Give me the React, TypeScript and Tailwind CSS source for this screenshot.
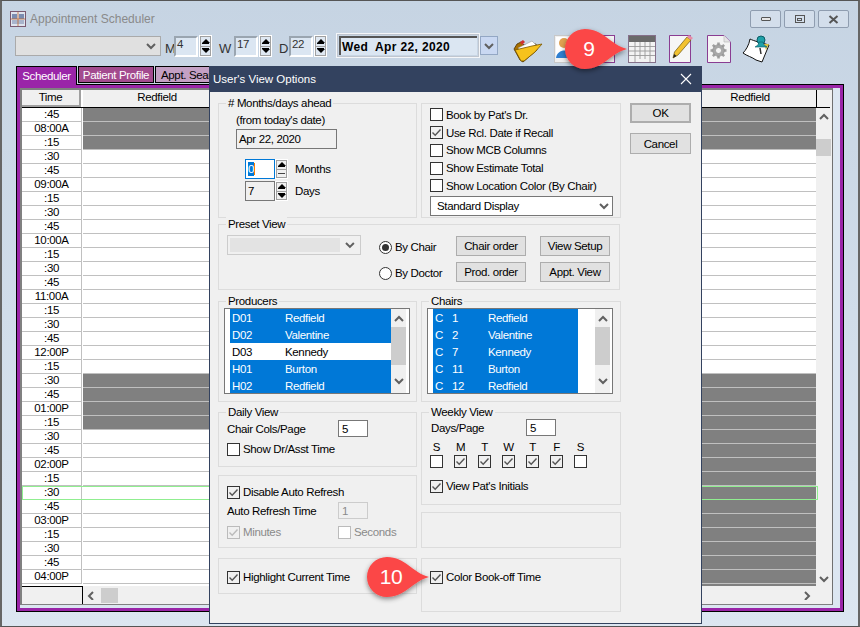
import type { ReactNode } from "react";

const times = Array.from({ length: 34 }, (_, i) => {
  const mins = 7 * 60 + 45 + i * 15;
  if (mins % 60 !== 0) return `:${mins % 60}`;
  const h = Math.floor(mins / 60);
  const h12 = h > 12 ? h - 12 : h;
  return `${String(h12).padStart(2, "0")}:00${h >= 12 ? "P" : "A"}`;
});

const isTop = (i: number) => i <= 2;
const firstGray = (i: number) => isTop(i) || (i >= 19 && i <= 22);
const lastGray = (i: number) => isTop(i) || i >= 19;

function Chevron({ dir, className = "" }: { dir: "up" | "down" | "left" | "right"; className?: string }) {
  const d = {
    up: "M1 6 L5 2 L9 6",
    down: "M1 2 L5 6 L9 2",
    left: "M6 1 L2 5 L6 9",
    right: "M3 1 L7 5 L3 9",
  }[dir];
  return (
    <svg width="10" height="10" viewBox="0 0 10 8" className={className}>
      <path d={d} fill="none" stroke="#606060" strokeWidth="2" />
    </svg>
  );
}

function Check({ color = "#555" }: { color?: string }) {
  return (
    <svg width="11" height="11" viewBox="0 0 11 11">
      <path d="M1.5 5.5 L4.2 8.2 L9.5 2.5" fill="none" stroke={color} strokeWidth="1.4" />
    </svg>
  );
}

function Box({ checked, disabled }: { checked?: boolean; disabled?: boolean }) {
  return (
    <span
      className={`flex h-[13px] w-[13px] shrink-0 items-center justify-center border ${
        disabled ? "border-[#bbbbbb]" : "border-[#333333]"
      } ${checked ? "bg-[#f0f0f0]" : "bg-white"}`}
    >
      {checked && <Check color={disabled ? "#bbbbbb" : "#555"} />}
    </span>
  );
}

function CheckRow({ label, checked, disabled, className = "" }: { label: string; checked?: boolean; disabled?: boolean; className?: string }) {
  return (
    <div className={`flex items-center gap-[3px] ${className}`}>
      <Box checked={checked} disabled={disabled} />
      <span className={disabled ? "text-[#8a8a8a]" : ""}>{label}</span>
    </div>
  );
}

function Radio({ label, on }: { label: string; on?: boolean }) {
  return (
    <div className="flex h-[14px] items-center gap-[3px]">
      <span className="flex h-[13px] w-[13px] items-center justify-center rounded-full border border-[#333333] bg-white">
        {on && <span className="h-[7px] w-[7px] rounded-full bg-[#333333]" />}
      </span>
      <span>{label}</span>
    </div>
  );
}

function Btn({ children, className = "" }: { children: ReactNode; className?: string }) {
  return (
    <div className={`flex items-center justify-center border border-[#adadad] bg-[#e1e1e1] ${className}`}>
      {children}
    </div>
  );
}

function Group({ legend, className = "", children }: { legend?: string; className?: string; children?: ReactNode }) {
  return (
    <div className={`relative border border-[#dcdcdc] ${className}`}>
      {legend && (
        <span className="absolute -top-[8px] left-[7px] bg-[#f0f0f0] px-[2px] leading-[14px]">{legend}</span>
      )}
      {children}
    </div>
  );
}

function Spin({ light, flat }: { light?: boolean; flat?: boolean }) {
  return (
    <div className={`flex h-full w-[13px] flex-col border border-white ${light ? "bg-[#dfe8f2]" : "bg-[#f0f0f0]"}`}>
      <div className="flex flex-1 flex-col items-center justify-center border border-[#a0a0a0]">
        <span className="h-0 w-0 border-x-[4px] border-b-[4px] border-x-transparent border-b-black" />
        <span className="h-px w-[7px] bg-black" />
      </div>
      <div className="flex flex-1 flex-col items-center justify-center border border-t-0 border-[#a0a0a0]">
        <span className={`h-px w-[7px] ${flat ? "bg-[#444444]" : "bg-black"}`} />
        {!flat && <span className="h-0 w-0 border-x-[4px] border-t-[4px] border-x-transparent border-t-black" />}
      </div>
    </div>
  );
}

function TopSpin({ label, value, labelW }: { label: string; value: string; labelW: string }) {
  return (
    <div className="flex h-[22px] items-end">
      <span className={`${labelW} text-[13px] leading-[16px] text-[#333333]`}>{label}</span>
      <div className="h-[21px] w-[24px] border-2 border-t-[#9aa5b0] border-l-[#9aa5b0] border-r-white border-b-white bg-[#dbe6f2] pl-[1px] leading-[13px] text-[#333333]">
        {value}
      </div>
      <div className="ml-px h-[22px]">
        <Spin light />
      </div>
    </div>
  );
}

function Listing({
  rows,
  selectedW,
  gutter,
}: {
  rows: { code: ReactNode; name: string; off?: boolean }[];
  selectedW: string;
  gutter?: boolean;
}) {
  return (
    <div className="flex h-[86px] w-[186px] overflow-hidden border border-[#777777] bg-white pl-[5px]">
      <div className={`${selectedW} shrink-0`}>
        {rows.map((r) => (
          <div
            key={r.name + String(r.code)}
            className={`flex h-[17px] items-center pl-[2px] ${r.off ? "bg-white text-black" : "bg-[#0078d7] text-white"}`}
          >
            <span className="flex w-[53px] shrink-0">{r.code}</span>
            <span>{r.name}</span>
          </div>
        ))}
      </div>
      {gutter && <div className="w-[17px] shrink-0" />}
      <div className="flex h-full w-[15px] shrink-0 flex-col items-center bg-[#f0f0f0] pt-[5px]">
        <Chevron dir="up" />
        <div className="mt-[3px] h-[38px] w-[15px] bg-[#cdcdcd]" />
        <Chevron dir="down" className="mt-[11px]" />
      </div>
    </div>
  );
}

function Callout({ n, className }: { n: string; className: string }) {
  return (
    <svg width="76" height="56" viewBox="0 0 76 56" className={`absolute z-30 ${className}`}>
      <defs>
        <filter id={`s${n}`} x="-20%" y="-20%" width="140%" height="150%">
          <feDropShadow dx="0" dy="2" stdDeviation="2.5" floodColor="#000" floodOpacity="0.45" />
        </filter>
      </defs>
      <path
        d="M68 24 C52 20 44 4 26 4 A20 20 0 1 0 26 44 C44 44 52 28 68 24 Z"
        fill="#fb4646"
        filter={`url(#s${n})`}
      />
      <text x="30" y="31" textAnchor="middle" fill="#fff" fontSize="21" fontFamily="Liberation Sans, Arial, sans-serif">
        {n}
      </text>
    </svg>
  );
}

function FolderIcon() {
  return (
    <svg width="30" height="24" viewBox="0 0 30 24" className="mt-[6px]">
      <path d="M1 10 L7 21 L10 23 L24 11 L23 5 L11 6 L8 3 L4 5 Z" fill="#a87000" stroke="#4a3000" strokeWidth="0.8" />
      <path d="M5 9 L19 2 L23 6 L9 14 Z" fill="#fff" stroke="#888" strokeWidth="0.5" />
      <path d="M2 11 L19 7 L29 5 L22 13 L11 22 L8 22 Z" fill="#f6c21c" stroke="#7a5600" strokeWidth="0.8" />
      <path d="M7 3 L10 1 L12 3 L9 6 Z" fill="#d03030" />
    </svg>
  );
}

function PersonIcon() {
  return (
    <svg width="28" height="28" viewBox="0 0 28 28">
      <rect x="0.5" y="0.5" width="27" height="27" fill="#f0f0f0" stroke="#c8c8c8" />
      <rect x="2" y="2" width="24" height="21" fill="#fff" />
      <circle cx="10" cy="8" r="5" fill="#e0a050" />
      <path d="M2 23 C3 13 18 13 19 23 Z" fill="#2f7fd0" />
    </svg>
  );
}

function CalendarIcon() {
  return (
    <svg width="28" height="28" viewBox="0 0 28 28">
      <rect x="0.5" y="0.5" width="27" height="27" fill="#f3f3f3" stroke="#85708a" />
      <rect x="1" y="1" width="26" height="6" fill="#6a6a6a" />
      <path d="M1 11.5 H27 M1 16 H27 M1 20.5 H27 M7 7 V27 M12 7 V24 M17 7 V24 M22 7 V27" stroke="#9a9a9a" strokeWidth="0.9" />
    </svg>
  );
}

function PencilIcon() {
  return (
    <svg width="24" height="28" viewBox="0 0 24 28">
      <path d="M0.5 0.5 H21.5 V27.5 H0.5 Z" fill="#f6f6f6" stroke="#8a3d92" />
      <path d="M4 23 L5.5 17 L18 2 L22 5 L9 20 Z" fill="#f2c230" stroke="#6a5410" strokeWidth="0.7" />
      <path d="M18 2 L20 0 L24 3 L22 5 Z" fill="#e88ca8" />
      <path d="M4 23 L5.2 19 L7.5 21 Z" fill="#222" />
    </svg>
  );
}

function GearIcon() {
  return (
    <svg width="24" height="28" viewBox="0 0 24 28">
      <path d="M0.5 0.5 H17 L23.5 7 V27.5 H0.5 Z" fill="#f4f4f4" stroke="#8a3d92" />
      <path d="M17 0.5 V7 H23.5" fill="#e4e4e4" stroke="#bbb" strokeWidth="0.7" />
      <g transform="translate(11.5 15.5)">
        {[0, 45, 90, 135].map((a) => (
          <rect key={a} x="-1.3" y="-8" width="2.6" height="16" fill="#a0a0a0" transform={`rotate(${a})`} />
        ))}
        <circle r="5.8" fill="#a8a8a8" stroke="#888" strokeWidth="0.6" />
        <circle r="3" fill="#f4f4f4" stroke="#888" strokeWidth="0.6" />
      </g>
    </svg>
  );
}

function PinIcon() {
  return (
    <svg width="30" height="28" viewBox="0 0 30 28">
      <path d="M8 4 C12 6 20 8 27 10 L20 27 L14 25 C10 22 5 21 1 18 C4 15 7 10 8 4 Z" fill="#fff" stroke="#111" strokeWidth="1" />
      <path d="M22 9 L27 9 L24 15 Z" fill="#d8c040" />
      <path d="M18 13 L19 19" stroke="#333" strokeWidth="1.5" />
      <circle cx="19" cy="5" r="4" fill="#1fa0a8" stroke="#0b5d66" />
      <path d="M17 7 H21 L22 10 L25 12 H13 L16 10 Z" fill="#1fa0a8" stroke="#0b5d66" strokeWidth="0.6" />
    </svg>
  );
}

function WinBtn({ children }: { children: ReactNode }) {
  return (
    <div className="flex h-[18px] w-[31px] items-center justify-center rounded-[2px] border border-[#8f9db0] bg-[#d3deeb]">
      {children}
    </div>
  );
}

const producers = [
  { code: "D01", name: "Redfield" },
  { code: "D02", name: "Valentine" },
  { code: "D03", name: "Kennedy", off: true },
  { code: "H01", name: "Burton" },
  { code: "H02", name: "Redfield" },
];

const chair = (n: string) => (
  <>
    <span className="w-[17px]">C</span>
    <span>{n}</span>
  </>
);

const chairs = [
  { code: chair("1"), name: "Redfield" },
  { code: chair("2"), name: "Valentine" },
  { code: chair("7"), name: "Kennedy" },
  { code: chair("11"), name: "Burton" },
  { code: chair("12"), name: "Redfield" },
];

const week = [
  { d: "S", on: false },
  { d: "M", on: true },
  { d: "T", on: true },
  { d: "W", on: true },
  { d: "T", on: true },
  { d: "F", on: true },
  { d: "S", on: false },
];

function Dialog() {
  return (
    <div className="absolute left-[207px] top-[65px] z-20 flex h-[558px] w-[493px] flex-col border-x border-b border-[#33425f] bg-[#f0f0f0]">
      <div className="flex h-[26px] shrink-0 items-center justify-between bg-[#33425f] pl-[3px] pr-[9px] text-[11.5px] tracking-normal text-white">
        <span>User's View Options</span>
        <svg width="12" height="12" viewBox="0 0 12 12">
          <path d="M1 1 L11 11 M11 1 L1 11" stroke="#fff" strokeWidth="1.1" />
        </svg>
      </div>
      <div className="flex gap-[9px] pl-[8px] pt-[11px]">
        <div className="flex w-[403px] flex-col">
          {/* top groups */}
          <div className="flex gap-[4px]">
            <Group legend="# Months/days ahead" className="h-[115px] w-[199px] pl-[17px] pt-[9px]">
              <div>(from today's date)</div>
              <div className="mt-[2px] flex h-[20px] w-[101px] items-center border border-[#777777] pl-[2px]">
                Apr 22, 2020
              </div>
              <div className="ml-[9px] mt-[10px] flex h-[20px] items-center">
                <div className="flex h-[20px] w-[30px] items-center border border-[#0078d7] bg-white pl-[2px]">
                  <span className="bg-[#0078d7] text-white">0</span>
                  <span className="h-[12px] w-px bg-[#ff8000]" />
                </div>
                <Spin flat />
                <span className="ml-[7px]">Months</span>
              </div>
              <div className="ml-[9px] mt-[2px] flex h-[20px] items-center">
                <div className="flex h-[20px] w-[30px] items-center border border-[#777777] pl-[2px]">7</div>
                <Spin />
                <span className="ml-[7px]">Days</span>
              </div>
            </Group>
            <Group className="h-[115px] w-[200px] pl-[8px] pt-[2px]">
              <CheckRow className="h-[17.75px]" label="Book by Pat's Dr." />
              <CheckRow className="h-[17.75px]" label="Use Rcl. Date if Recall" checked />
              <CheckRow className="h-[17.75px]" label="Show MCB Columns" />
              <CheckRow className="h-[17.75px]" label="Show Estimate Total" />
              <CheckRow className="h-[17.75px]" label="Show Location Color (By Chair)" />
              <div className="mt-px flex h-[20px] w-[183px] items-center justify-between border border-[#777777] bg-white pl-[6px] pr-[3px]">
                <span>Standard Display</span>
                <Chevron dir="down" />
              </div>
            </Group>
          </div>

          {/* preset view */}
          <Group legend="Preset View" className="mt-[6px] flex h-[66px] w-[402px] pl-[8px] pt-[10px]">
            <div className="flex h-[20px] w-[134px] items-center border border-[#cccccc] py-[2px] pl-[2px] pr-[5px]">
              <div className="h-full w-[112px] bg-[#e3e3e3]" />
              <Chevron dir="down" className="ml-[5px]" />
            </div>
            <div className="ml-[18px] mt-[5px] flex w-[77px] flex-col gap-[12px]">
              <Radio label="By Chair" on />
              <Radio label="By Doctor" />
            </div>
            <div className="mt-px grid h-fit grid-cols-[70px_70px] gap-x-[14px] gap-y-[6px]">
              <Btn className="h-[20px]">Chair order</Btn>
              <Btn className="h-[20px]">View Setup</Btn>
              <Btn className="h-[20px]">Prod. order</Btn>
              <Btn className="h-[20px]">Appt. View</Btn>
            </div>
          </Group>

          {/* lists */}
          <div className="mt-[11px] flex gap-[4px]">
            <Group legend="Producers" className="h-[101px] w-[199px] pl-[5px] pt-[6px]">
              <Listing rows={producers} selectedW="w-[161px]" />
            </Group>
            <Group legend="Chairs" className="h-[101px] w-[200px] pl-[5px] pt-[6px]">
              <Listing rows={chairs} selectedW="w-[145px]" gutter />
            </Group>
          </div>

          {/* lower columns */}
          <div className="mt-[10px] flex gap-[4px]">
            <div className="flex w-[199px] flex-col">
              <Group legend="Daily View" className="h-[55px] pl-[8px] pt-[7px]">
                <div className="flex items-center">
                  <span className="w-[111px]">Chair Cols/Page</span>
                  <div className="flex h-[17px] w-[30px] items-center border border-[#777777] bg-white pl-[3px]">5</div>
                </div>
                <CheckRow className="mt-[5px] h-[14px]" label="Show Dr/Asst Time" />
              </Group>
              <Group className="mt-[8px] h-[73px] pl-[8px] pt-[9px]">
                <CheckRow className="h-[14px]" label="Disable Auto Refresh" checked />
                <div className="mt-[3px] flex items-center">
                  <span className="w-[111px]">Auto Refresh Time</span>
                  <div className="flex h-[17px] w-[30px] items-center border border-[#cccccc] pl-[3px] text-[#8a8a8a]">1</div>
                </div>
                <div className="mt-[6px] flex">
                  <CheckRow className="h-[14px] w-[111px]" label="Minutes" checked disabled />
                  <CheckRow className="h-[14px]" label="Seconds" disabled />
                </div>
              </Group>
              <Group className="mt-[10px] h-[36px] pl-[8px] pt-[11px]">
                <CheckRow className="h-[14px]" label="Highlight Current Time" checked />
              </Group>
            </div>
            <div className="flex w-[200px] flex-col">
              <Group legend="Weekly View" className="h-[93px] pl-[8px] pt-[6px]">
                <div className="flex items-center">
                  <span className="w-[96px] pl-px">Days/Page</span>
                  <div className="flex h-[17px] w-[30px] items-center border border-[#777777] bg-white pl-[3px]">5</div>
                </div>
                <div className="mt-[4px] flex gap-[11px]">
                  {week.map((w, i) => (
                    <span key={i} className="w-[13px] text-center">{w.d}</span>
                  ))}
                </div>
                <div className="mt-px flex gap-[11px]">
                  {week.map((w, i) => (
                    <Box key={i} checked={w.on} />
                  ))}
                </div>
                <CheckRow className="mt-[11px] h-[14px]" label="View Pat's Initials" checked />
              </Group>
              <Group className="mt-[7px] h-[36px]" />
              <Group className="mt-[10px] h-[54px] pl-[8px] pt-[11px]">
                <CheckRow className="h-[14px]" label="Color Book-off Time" checked />
              </Group>
            </div>
          </div>
        </div>

        <div className="flex w-[61px] flex-col gap-[10px]">
          <Btn className="h-[20px] border-2 border-[#0078d7]">OK</Btn>
          <Btn className="h-[21px]">Cancel</Btn>
        </div>
      </div>
    </div>
  );
}

function ScheduleGrid() {
  return (
    <div className="flex h-[514px] flex-col bg-[#f0f0f0]">
      <div className="flex flex-1">
        <div className="flex w-[794px] flex-col">
          <div className="flex h-[18px] border-b border-black bg-[#f0f0f0]">
            <div className="w-[59px] border-b-2 border-r-2 border-[#a0a0a0] text-center">Time</div>
            <div className="w-[2px] bg-white" />
            <div className="w-[148px] text-center">Redfield</div>
            <div className="flex-1" />
            <div className="w-[132px] text-center">Redfield</div>
          </div>
          {times.map((t, i) => (
            <div
              key={i}
              className={`flex h-[14px] ${
                i === 27 ? "relative z-10 w-[796px] outline-1 -outline-offset-1 outline-[#90ee90]" : ""
              }`}
            >
              <div className="w-[59px] border-b border-[#c0c0c0] bg-white text-center leading-[13px]">{t}</div>
              <div className="w-[1px] bg-[#c0c0c0]" />
              <div className="w-[1px] bg-white" />
              <div className={`w-[148px] border-b border-[#c0c0c0] ${firstGray(i) ? "bg-[#808080]" : "bg-white"}`} />
              <div className="flex-1 border-b border-[#c0c0c0] bg-white" />
              <div className={`w-[132px] border-b border-[#c0c0c0] ${lastGray(i) ? "bg-[#808080]" : "bg-white"}`} />
              {i === 27 && <div className="w-[2px]" />}
            </div>
          ))}
          <div className="flex h-[2px]">
            <div className="w-[61px] bg-white" />
            <div className="flex-1 bg-white" />
            <div className="w-[132px] bg-[#808080]" />
          </div>
        </div>
        <div className="flex flex-1 flex-col">
          <div className="mr-[2px] h-[18px] border-b border-l border-black" />
          <div className="flex w-[15px] flex-1 flex-col items-center pt-[4px]">
            <Chevron dir="up" />
            <div className="mt-[17px] h-[17px] w-[15px] bg-[#cdcdcd]" />
            <Chevron dir="down" className="mt-auto mb-[2px]" />
          </div>
        </div>
      </div>
      <div className="flex h-[18px] items-center">
        <div className="h-full w-[61px] border-r border-t border-black" />
        <Chevron dir="left" className="ml-[4px]" />
        <div className="ml-[4px] h-[15px] w-[17px] bg-[#cdcdcd]" />
        <Chevron dir="right" className="ml-[684px]" />
      </div>
    </div>
  );
}

export default function App() {
  return (
    <div className="relative h-[627px] w-[860px] overflow-hidden border-x-2 border-y border-x-[#666666] border-y-[#555555] bg-gradient-to-b from-[#c6d4e3] to-[#dce6f1] font-['Liberation_Sans',Arial,sans-serif] text-[11.5px] leading-[14px] tracking-[-0.35px] text-black">
      {/* title row */}
      <div className="mt-[9px] flex h-[18px] items-center pl-[8px] pr-[9px]">
        <svg width="16" height="16" viewBox="0 0 16 16">
          <rect x="0.5" y="0.5" width="15" height="15" fill="#dfe4ee" stroke="#7a5a70" />
          <rect x="2" y="3" width="5" height="5" fill="#7a8cb0" />
          <rect x="9" y="3" width="5" height="5" fill="#7a8cb0" />
          <rect x="2" y="9" width="12" height="4" fill="#a8b4cc" />
          <path d="M8 1 V15 M1 8 H15" stroke="#c06a30" strokeWidth="0.8" />
        </svg>
        <span className="ml-[4px] text-[12px] tracking-normal text-[#8a8a8a]">Appointment Scheduler</span>
        <div className="ml-auto flex gap-[3px]">
          <WinBtn><span className="h-[4px] w-[10px] rounded-[1px] border border-[#555555] bg-[#e6e6e6]" /></WinBtn>
          <WinBtn><span className="flex h-[8px] w-[10px] items-center justify-center border border-[#555555]"><span className="h-[3px] w-[5px] border border-[#555555]" /></span></WinBtn>
          <WinBtn>
            <svg width="11" height="9" viewBox="0 0 11 9">
              <path d="M1.5 1 L9.5 8 M9.5 1 L1.5 8" stroke="#555" strokeWidth="2" />
            </svg>
          </WinBtn>
        </div>
      </div>

      {/* toolbar */}
      <div className="mt-[5px] flex h-[30px] items-start pl-[13px]">
        <div className="mt-[3px] flex h-[20px] w-[146px] items-center justify-end border border-[#aaaaaa] bg-[#e0e0e0] pr-[4px]">
          <Chevron dir="down" />
        </div>
        <div className="ml-[4px] mt-[2px]"><TopSpin label="M" value="4" labelW="w-[9px]" /></div>
        <div className="ml-[7px] mt-[2px]"><TopSpin label="W" value="17" labelW="w-[15px]" /></div>
        <div className="ml-[7px] mt-[2px]"><TopSpin label="D" value="22" labelW="w-[10px]" /></div>
        <div className="ml-[9px] flex h-[25px] w-[144px] items-center border-2 border-[#f4f6f9] outline-1 -outline-offset-2 outline-[#c0c6cf]">
          <div className="mx-px flex h-[19px] flex-1 items-center whitespace-pre border-l-2 border-t-2 border-[#555555] bg-[#dbe6f2] pl-[1px] text-[12px] font-bold tracking-[0.35px]">
            Wed  Apr 22, 2020
          </div>
        </div>
        <div className="mt-[3px] flex h-[19px] w-[18px] items-center justify-center border border-[#93a7c4] bg-[#c9d8f2]">
          <Chevron dir="down" />
        </div>
        <div className="ml-[15px]"><FolderIcon /></div>
        <div className="ml-[11px] mt-[2px]"><PersonIcon /></div>
        <div className="ml-[9px] mt-[2px] h-[28px] w-[24px] border border-[#8a3d92] bg-[#f4f4f4]" />
        <div className="ml-[13px] mt-[2px]"><CalendarIcon /></div>
        <div className="ml-[13px] mt-[2px]"><PencilIcon /></div>
        <div className="ml-[14px] mt-[2px]"><GearIcon /></div>
        <div className="ml-[11px] mt-[2px]"><PinIcon /></div>
      </div>

      {/* tabs */}
      <div className="ml-[14px] mt-[3px] flex h-[18px] items-start gap-[1px]">
        <div className="relative z-10 -mb-px flex h-[19px] w-[61px] items-center justify-center border border-b-0 border-black bg-[#9a25a8] text-white">
          Scheduler
        </div>
        <div className="flex h-[17px] w-[76px] items-center justify-center border border-black bg-[#a34a8e] text-white">
          Patient Profile
        </div>
        <div className="flex h-[17px] w-[70px] items-center overflow-hidden whitespace-nowrap border border-black bg-[#c4a0c4] pl-[5px]">
          Appt. Search
        </div>
      </div>

      {/* tab panel */}
      <div className="ml-[14px] h-[528px] w-[828px] border border-black">
        <div className="h-full border-[3px] border-[#9a25a8] bg-[#dce6f1] pb-[3px] pr-[7px]">
          <div className="h-[517px] border-b border-l-2 border-r border-t-2 border-b-[#808080] border-l-[#808080] border-r-[#707070] border-t-[#808080]">
            <ScheduleGrid />
          </div>
        </div>
      </div>

      <Dialog />
      <Callout n="9" className="left-[557px] top-[24px]" />
      <Callout n="10" className="left-[359px] top-[552px]" />
    </div>
  );
}
